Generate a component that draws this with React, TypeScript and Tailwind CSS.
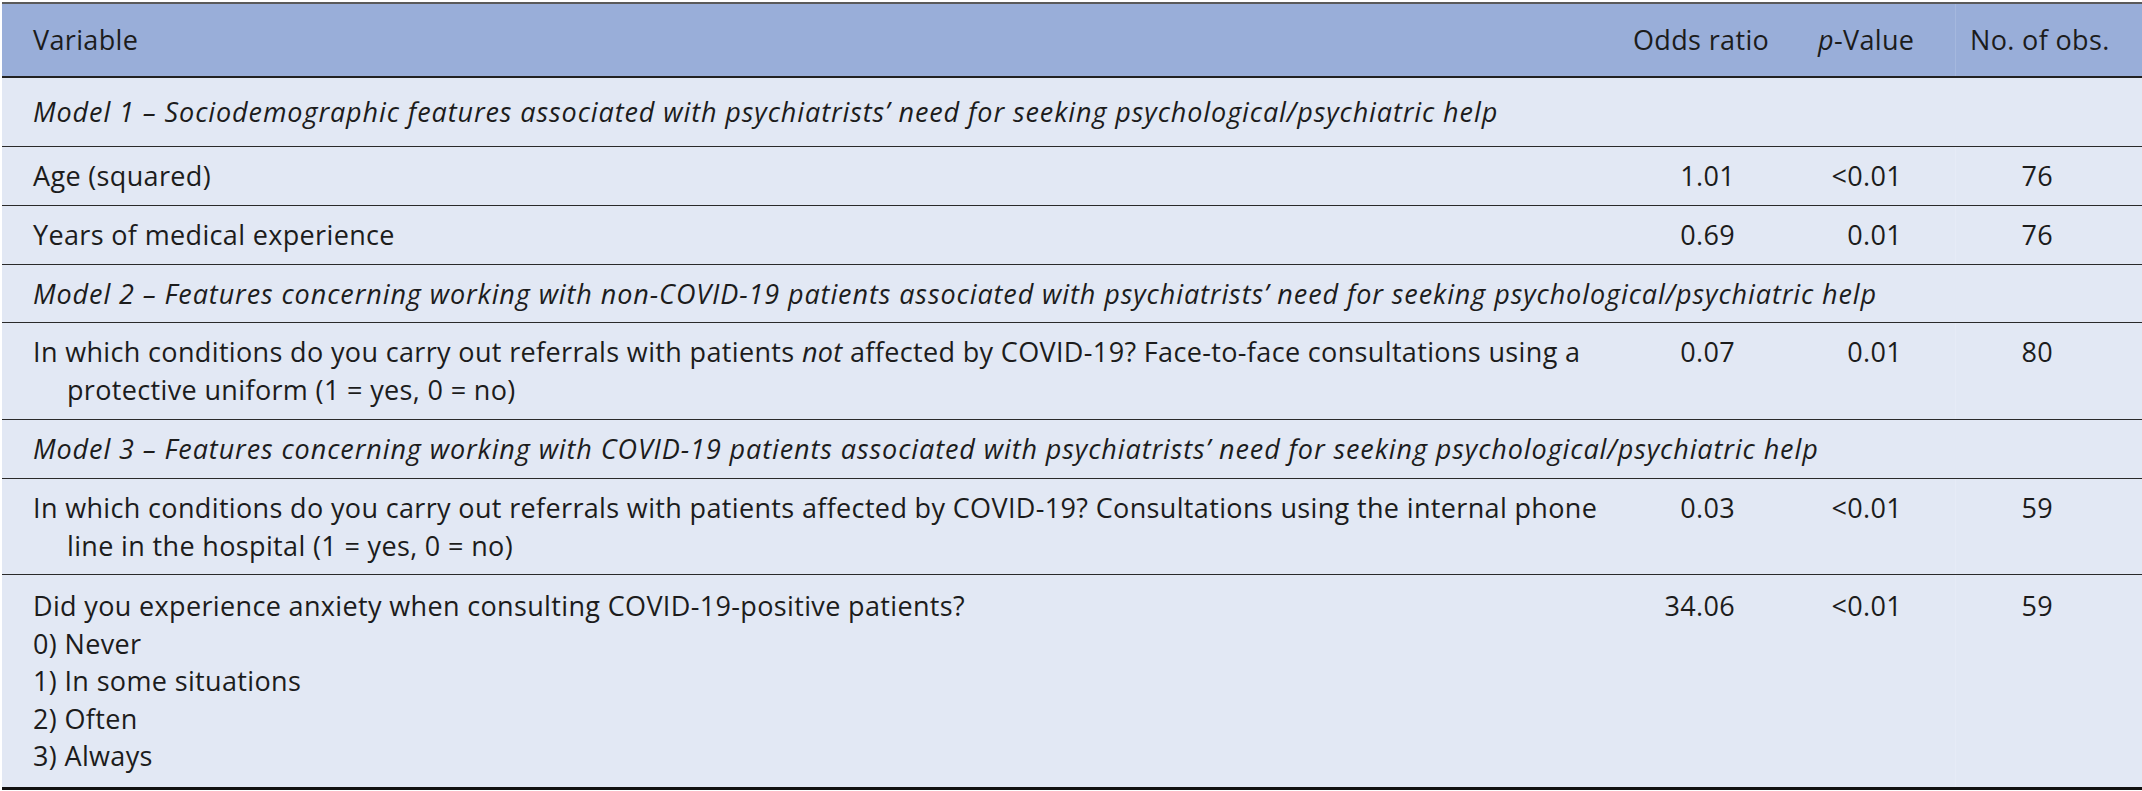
const font = { fontFamily: '"Open Sans", "Noto Sans", sans-serif' }

type Row =
  | { kind: 'model'; text: string; h: string; pt: string }
  | { kind: 'data'; lines: React.ReactNode[]; odds: string; p: string; n: string; h: string; pt: string }

const rows: Row[] = [
  {
    kind: 'model',
    text: 'Model 1 – Sociodemographic features associated with psychiatrists’ need for seeking psychological/psychiatric help',
    h: 'h-[68px]',
    pt: 'pt-[15px]',
  },
  { kind: 'data', lines: ['Age (squared)'], odds: '1.01', p: '<0.01', n: '76', h: 'h-[58px]', pt: 'pt-[10px]' },
  { kind: 'data', lines: ['Years of medical experience'], odds: '0.69', p: '0.01', n: '76', h: 'h-[58px]', pt: 'pt-[10px]' },
  {
    kind: 'model',
    text: 'Model 2 – Features concerning working with non-COVID-19 patients associated with psychiatrists’ need for seeking psychological/psychiatric help',
    h: 'h-[57px]',
    pt: 'pt-[10px]',
  },
  {
    kind: 'data',
    lines: [
      <>
        In which conditions do you carry out referrals with patients <em>not</em> affected by COVID-19? Face-to-face
        consultations using a
      </>,
      <span className="pl-[34px]">protective uniform (1 = yes, 0 = no)</span>,
    ],
    odds: '0.07',
    p: '0.01',
    n: '80',
    h: 'h-[96px]',
    pt: 'pt-[10px]',
  },
  {
    kind: 'model',
    text: 'Model 3 – Features concerning working with COVID-19 patients associated with psychiatrists’ need for seeking psychological/psychiatric help',
    h: 'h-[58px]',
    pt: 'pt-[10px]',
  },
  {
    kind: 'data',
    lines: [
      'In which conditions do you carry out referrals with patients affected by COVID-19? Consultations using the internal phone',
      <span className="pl-[34px]">line in the hospital (1 = yes, 0 = no)</span>,
    ],
    odds: '0.03',
    p: '<0.01',
    n: '59',
    h: 'h-[95px]',
    pt: 'pt-[10px]',
  },
  {
    kind: 'data',
    lines: [
      'Did you experience anxiety when consulting COVID-19-positive patients?',
      '0) Never',
      '1) In some situations',
      '2) Often',
      '3) Always',
    ],
    odds: '34.06',
    p: '<0.01',
    n: '59',
    h: 'h-[212px]',
    pt: 'pt-[12px]',
  },
]

const cols = 'grid grid-cols-[1618px_188px_147px_187px]'

export default function App() {
  return (
    <div className="w-[2142px] h-[791px] bg-white overflow-hidden" style={font}>
      <div className="ml-[2px] mt-[2px] w-[2140px] text-[27px] leading-[37.5px] tracking-[0.35px] text-[#1c1c1c] bg-[#e2e8f4] border-t-2 border-[#5a5a5a] border-b-[3px] border-b-[#111]">
        {/* Header */}
        <div className={`${cols} h-[74px] bg-[#99aed9] border-b-2 border-[#222] items-center`}>
          <div className="pl-[31px]">Variable</div>
          <div className="pl-[13px] h-full flex items-center">Odds ratio</div>
          <div className="pl-[10px] h-full flex items-center">
            <em>p</em>-Value
          </div>
          <div className="pl-[14px] h-full flex items-center border-l border-[#a5b8de]">No. of obs.</div>
        </div>

        {rows.map((r, i) => (
          <div
            key={i}
            className={`${r.h} ${i < rows.length - 1 ? 'border-b border-[#2a2a2a]' : ''} box-content`}
          >
            {r.kind === 'model' ? (
              <div className={`${r.pt} pl-[31px] italic tracking-[0.9px] whitespace-nowrap`}>{r.text}</div>
            ) : (
              <div className={`${cols} h-full`}>
                <div className={`${r.pt} pl-[31px] flex flex-col whitespace-nowrap`}>
                  {r.lines.map((l, j) => (
                    <div key={j}>{l}</div>
                  ))}
                </div>
                <div className={`${r.pt} pr-[73px] text-right`}>{r.odds}</div>
                <div className={`${r.pt} pr-[53px] text-right`}>{r.p}</div>
                <div className={`${r.pt} pr-[89px] text-right border-l border-[#e6ebf6] h-full`}>{r.n}</div>
              </div>
            )}
          </div>
        ))}
      </div>
    </div>
  )
}
